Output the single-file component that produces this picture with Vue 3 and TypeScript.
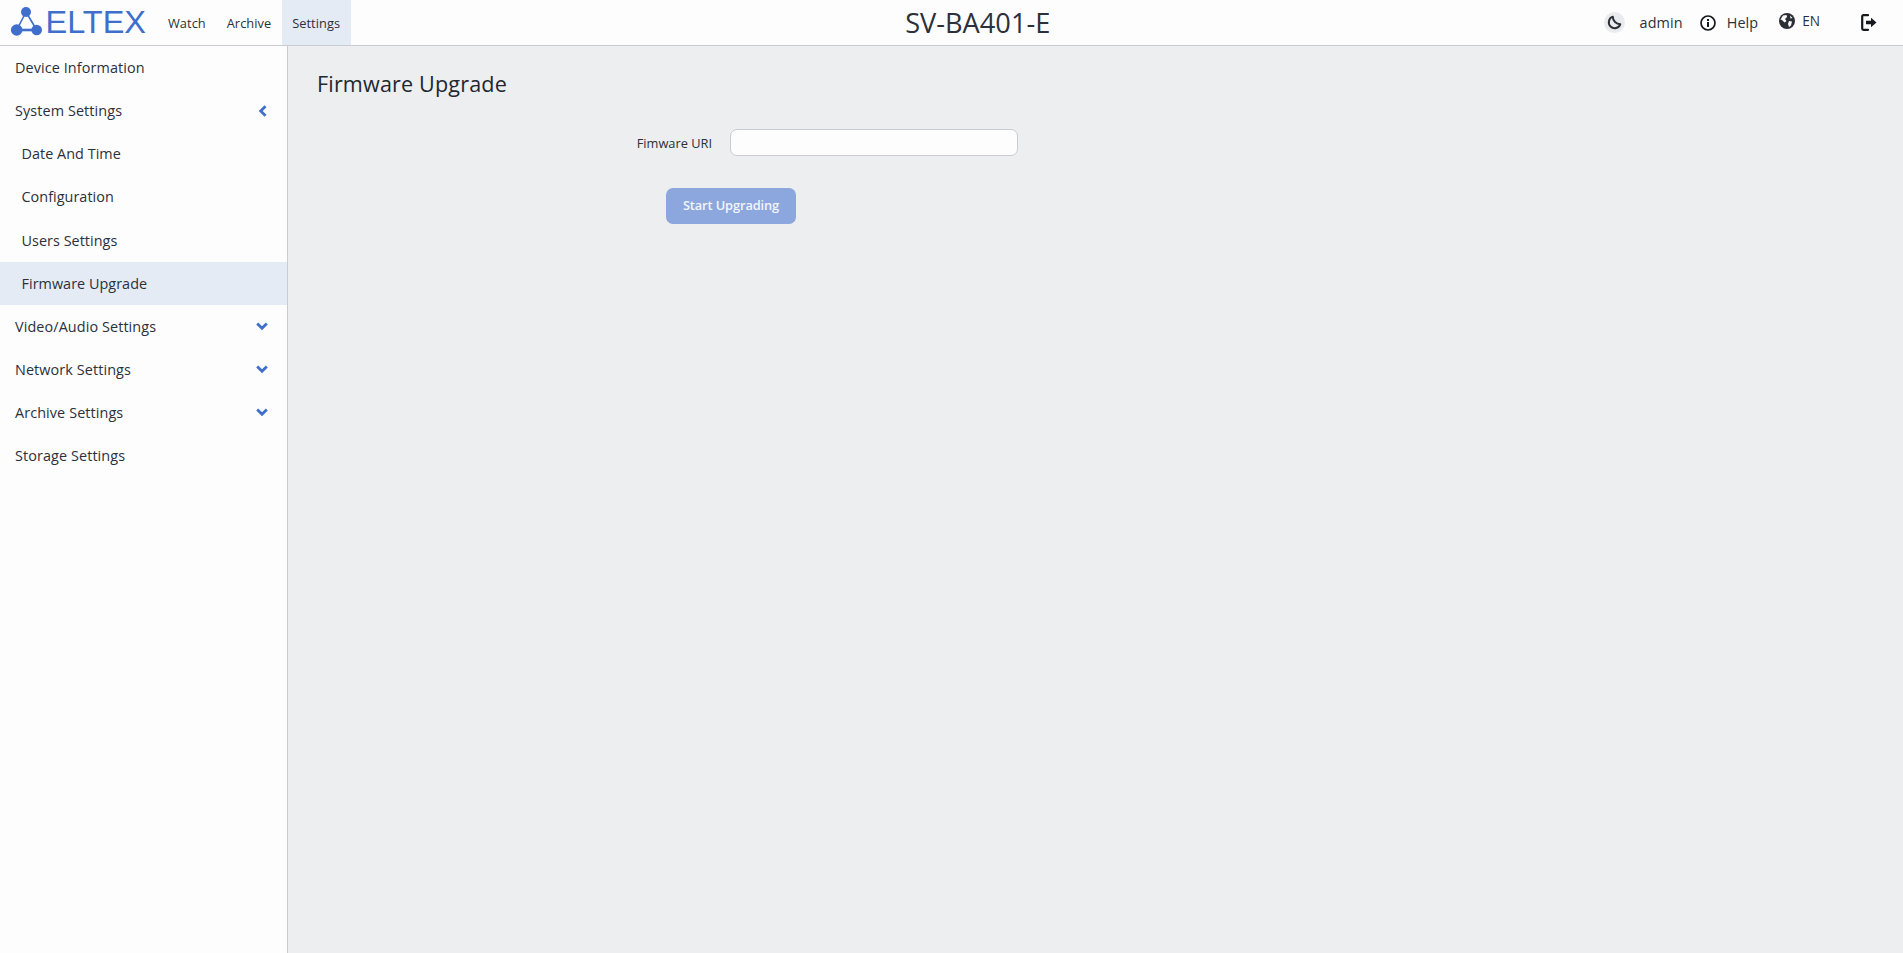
<script setup lang="ts">
interface MenuItem { label: string; sub?: boolean; active?: boolean; chevron?: 'left' | 'down' }
const nav: string[] = ['Watch', 'Archive', 'Settings']
const menu: MenuItem[] = [
  { label: 'Device Information' },
  { label: 'System Settings', chevron: 'left' },
  { label: 'Date And Time', sub: true },
  { label: 'Configuration', sub: true },
  { label: 'Users Settings', sub: true },
  { label: 'Firmware Upgrade', sub: true, active: true },
  { label: 'Video/Audio Settings', chevron: 'down' },
  { label: 'Network Settings', chevron: 'down' },
  { label: 'Archive Settings', chevron: 'down' },
  { label: 'Storage Settings' },
]
</script>

<template>
  <div class="page">
    <header class="header">
      <div class="left">
        <svg class="logo" width="140" height="45" viewBox="0 0 140 45">
          <path d="M16 12 L6.700 30 L26.700 30 Z" fill="none" stroke="#3f6fcb" stroke-width="1.600" />
          <path d="M6.700 30 L26.700 30" fill="none" stroke="#3f6fcb" stroke-width="2.600" />
          <g fill="#3f6fcb">
            <circle cx="16" cy="12" r="5" />
            <circle cx="6.700" cy="30" r="5.800" />
            <circle cx="26.700" cy="30" r="5.300" />
          </g>
          <text x="35.500" y="33" class="logo-text" textLength="100.500" lengthAdjust="spacingAndGlyphs">ELTEX</text>
        </svg>
        <nav class="nav">
          <a v-for="n in nav" :key="n" class="nav-item" :class="{ on: n === 'Settings' }">{{ n }}</a>
        </nav>
      </div>
      <div class="title">SV-BA401-E</div>
      <div class="right">
        <span class="theme">
          <svg width="15" height="15" viewBox="0 0 16 16"><path d="M6.200 1.800A6.300 6.300 0 1 0 14.200 9.800 A8 8 0 0 1 6.200 1.800Z" fill="none" stroke="#2b2f36" stroke-width="2.100" stroke-linejoin="round" /></svg>
        </span>
        <span class="user">admin</span>
        <svg class="info" width="16" height="16" viewBox="0 0 16 16">
          <circle cx="8" cy="8" r="7" fill="none" stroke="#16181c" stroke-width="1.700" />
          <rect x="7" y="7" width="2" height="5" fill="#16181c" />
          <rect x="7" y="4" width="2" height="2" fill="#16181c" />
        </svg>
        <span class="help">Help</span>
        <svg class="globe" width="16" height="16" viewBox="0 0 16 16">
          <circle cx="8" cy="8" r="8" fill="#2b2f36" />
          <path d="M4 2.500 L7.500 2 L8 4 L6 6 L7.500 8 L5.500 9.500 L3 7 L1.500 6.500Z M10 8 L13 8.500 L12 12.500 L10 14 L9 11Z M11 2.500 L13.500 5 L11.500 5.500Z" fill="#fdfdfd" />
        </svg>
        <span class="lang">EN</span>
        <svg class="logout" width="16" height="17" viewBox="0 0 16 17">
          <path d="M7 1.200H2.500a1.300 1.300 0 0 0-1.300 1.300v12a1.300 1.300 0 0 0 1.300 1.300H7" fill="none" stroke="#16181c" stroke-width="2.200" stroke-linecap="round" />
          <path d="M5 6.800h5V3.800l5.500 4.700L10 13.200V10.200H5z" fill="#16181c" />
        </svg>
      </div>
    </header>
    <div class="body">
      <aside class="side">
        <div v-for="m in menu" :key="m.label" class="row" :class="{ sub: m.sub, active: m.active }">
          <span>{{ m.label }}</span>
          <svg v-if="m.chevron === 'down'" width="12" height="9" viewBox="0 0 12 9"><path d="M1.200 1.500 6 6.300l4.800-4.800" fill="none" stroke="#3f6fcb" stroke-width="2.800" /></svg>
          <svg v-if="m.chevron === 'left'" class="ch-left" width="9" height="12" viewBox="0 0 9 12"><path d="M7.500 1.200 2.700 6l4.800 4.800" fill="none" stroke="#3f6fcb" stroke-width="2.800" /></svg>
        </div>
      </aside>
      <main class="main">
        <h1 class="h1">Firmware Upgrade</h1>
        <form class="form" @submit.prevent>
          <div class="field">
            <label class="lbl">Fimware URI</label>
            <input class="inp" type="text" />
          </div>
          <button class="btn" type="button" disabled>Start Upgrading</button>
        </form>
      </main>
    </div>
  </div>
</template>

<style>
html, body { margin: 0; background: #edeef0; }
</style>

<style scoped>
.page {
  height: 953px;
  display: flex;
  flex-direction: column;
  overflow: hidden;
  font-family: "Open Sans", "Noto Sans", sans-serif;
  color: #2b303b;
}
.header {
  height: 45px;
  flex: none;
  border-bottom: 1px solid #c9ccd2;
  background: #fdfdfd;
  display: grid;
  grid-template-columns: 1fr auto 1fr;
  align-items: center;
}
.left { display: flex; align-items: center; height: 100%; }
.logo { margin-left: 10px; margin-right: 7.500px; flex: none; }
.logo-text {
  font-family: "Liberation Sans", sans-serif;
  font-size: 32px;
  fill: #3f6fcb;
}
.nav { display: flex; height: 100%; }
.nav-item {
  display: flex;
  align-items: center;
  padding: 0 10.500px;
  font-size: 12.800px;
  letter-spacing: 0.050px;
}
.nav-item.on { background: #e4ebf5; }
.title { font-size: 27.200px; line-height: 45px; padding-left: 52.500px; }
.right { display: flex; align-items: center; justify-content: flex-end; height: 100%; font-size: 14.400px; letter-spacing: 0.100px; }
.theme {
  width: 21px; height: 21px; border-radius: 50%;
  background: #e9ebef;
  display: flex; align-items: center; justify-content: center;
}
.user { margin-left: 15px; }
.info { margin-left: 17px; }
.help { margin-left: 11px; }
.globe { margin-left: 21px; margin-top: -3px; }
.lang { margin-left: 7px; font-size: 13.600px; margin-top: -5px; letter-spacing: 0; }
.logout { margin-left: 41px; margin-right: 26px; }
.body { flex: 1; display: flex; min-height: 0; }
.side {
  width: 287px;
  flex: none;
  background: #fdfdfd;
  border-right: 1px solid #c9ccd2;
}
.row {
  height: 43.200px;
  box-sizing: border-box;
  display: flex;
  align-items: center;
  justify-content: space-between;
  padding: 0 19px 0.600px 15px;
  font-size: 14.400px;
  letter-spacing: 0.100px;
}
.row.sub { padding-left: 21.500px; letter-spacing: 0.040px; }
.row.active { background: #e4ebf5; }
.ch-left { margin-right: 1px; margin-top: 1px; }
.main { flex: 1; padding: 0 29px; background: #edeef0; }
.h1 {
  margin: 0;
  padding-top: 23px;
  font-size: 21.600px;
  font-weight: 400;
  line-height: 30px;
  letter-spacing: 0.150px;
  color: #23272f;
}
.form { margin-top: 30px; }
.field { display: flex; align-items: center; }
.lbl { width: 395px; text-align: right; font-size: 12.800px; margin-right: 18px; }
.inp {
  width: 288px;
  height: 27px;
  box-sizing: border-box;
  background: #fdfdfd;
  border: 1px solid #c9ccd2;
  border-radius: 7px;
  outline: none;
  padding: 0 8px;
}
.btn {
  display: block;
  margin: 32px 0 0 349px;
  width: 130px;
  height: 36px;
  padding: 0 0 2px;
  background: #8ca7de;
  border: none;
  border-radius: 7px;
  color: #f2f5fb;
  font-family: inherit;
  font-size: 12.800px;
  font-weight: 600;
  letter-spacing: -0.100px;
}
</style>
